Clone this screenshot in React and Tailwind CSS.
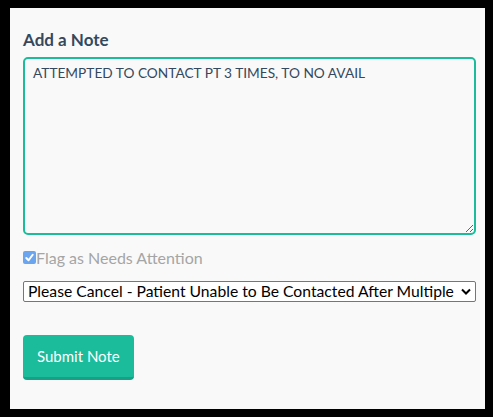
export default function App() {
  return (
    <div className="w-[493px] h-[417px] bg-black pt-[8px] pb-[8px] pl-[10px] pr-[8px]" style={{ fontFamily: 'Lato, "Open Sans", sans-serif' }}>
      <div className="h-full bg-[#f9f9f9] pl-[13px] pr-[9px] pt-[22px] flex flex-col">
        {/* Heading */}
        <h2 className="text-[17px] leading-[19px] font-bold text-[#34495e]">Add a Note</h2>

        {/* Note textarea */}
        <textarea
          className="mt-[8px] block w-full h-[178px] border-2 border-[#1abc9c] rounded-[5px] bg-[#f9f9f9] px-[8px] py-[6px] text-[13.7px] leading-[15.6px] text-[#34495e] outline-none resize"
          defaultValue="ATTEMPTED TO CONTACT PT 3 TIMES, TO NO AVAIL"
        />

        {/* Flag */}
        <label className="mt-[13px] flex items-center text-[16px] leading-[19px] text-[#a5a5a5]">
          <span className="w-[13px] h-[13px] rounded-[2px] bg-[#6ba5ef] flex items-center justify-center">
            <svg viewBox="0 0 12 12" className="w-[11px] h-[11px]" fill="none" stroke="white" strokeWidth="2.2" strokeLinecap="round" strokeLinejoin="round">
              <path d="M2.5 6.5 L5 9 L9.5 3" />
            </svg>
          </span>
          <span>Flag as Needs Attention</span>
        </label>

        {/* Reason select */}
        <div className="relative mt-[14px]">
          <select
            className="block w-full h-[21px] appearance-none border border-[#767676] rounded-[2px] bg-white pl-[4px] pr-[18px] text-[15.7px] leading-[19px] text-black"
            defaultValue="cancel"
          >
            <option value="cancel">Please Cancel - Patient Unable to Be Contacted After Multiple Attempts</option>
          </select>
          <svg
            className="pointer-events-none absolute right-[5px] top-[7px] w-[10px] h-[7px]"
            viewBox="0 0 10 7"
            fill="none"
            stroke="black"
            strokeWidth="2"
          >
            <path d="M1 1.5 L5 5.5 L9 1.5" />
          </svg>
        </div>

        {/* Submit */}
        <div className="mt-[33px]">
          <button className="h-[45px] px-[14px] bg-[#1abc9c] border-b-[3px] border-[#16a085] rounded-[4px] text-[15px] text-white">
            Submit Note
          </button>
        </div>
      </div>
    </div>
  )
}
